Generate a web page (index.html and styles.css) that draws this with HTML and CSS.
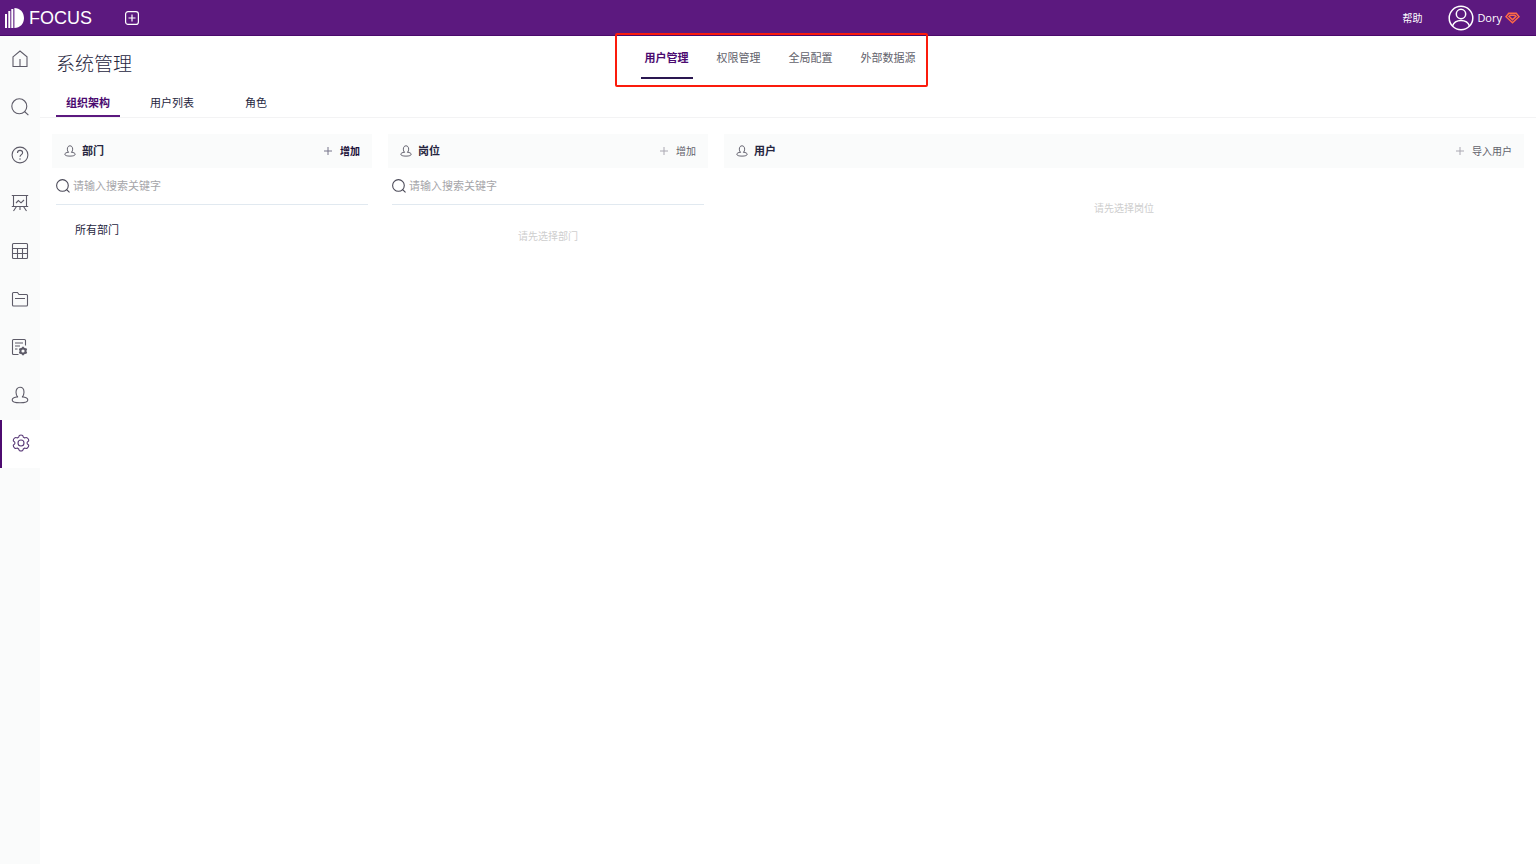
FILE: index.html
```html
<!DOCTYPE html>
<html lang="zh-CN">
<head>
<meta charset="utf-8">
<title>系统管理</title>
<link rel="stylesheet" href="styles.css">
</head>
<body>
<svg class="sprite" aria-hidden="true">
  <symbol id="person" viewBox="0 0 18 18"><path d="M6.900 11.300C5.600 9.900 5 8.200 5 6.200 5 3.200 6.600 1.200 9 1.200s4 2 4 5c0 2-.6 3.700-1.900 5.100M6.900 10.800C3.400 11.200 1.200 12.300 1.200 13.900c0 1.700 3 2.800 7.800 2.800s7.800-1.100 7.800-2.800c0-1.600-2.200-2.700-5.700-3.100"/></symbol>
  <symbol id="search" viewBox="0 0 18 18"><circle cx="8.300" cy="8.300" r="7.500"/><path d="M13.500 13.500l3.900 3.700"/></symbol>
  <symbol id="plus" viewBox="0 0 8 8"><path d="M4 0v8M0 4h8"/></symbol>
</svg>
<header class="topbar">
  <a class="brand" href="#">
    <svg class="brand-mark" viewBox="0 0 19 20" aria-hidden="true"><path d="M0 6h2v14H0zM3.300 3h2v17h-2zM6.300 1h2v19h-2zM9.400 0C15 0 19 4.300 19 10s-4 10-9.600 10z"/></svg>
    <span>FOCUS</span>
  </a>
  <button class="new-button" type="button" aria-label="新建">
    <svg viewBox="0 0 14 14"><rect x=".6" y=".6" width="12.800" height="12.800" rx="2.500"/><path d="M7 3.500v7M3.500 7h7"/></svg>
  </button>
  <a class="help" href="#">帮助</a>
  <button class="account" type="button">
    <svg class="avatar" viewBox="0 0 26 26" aria-hidden="true"><circle cx="13" cy="13" r="11.800"/><circle cx="13" cy="9" r="4.700"/><path d="M4.500 21c1.300-3.900 4.600-5.600 8.500-5.600s7.200 1.700 8.500 5.600"/></svg>
    <span>Dory</span>
    <svg class="gem" viewBox="0 0 16 12" aria-hidden="true"><path d="M4 1h8l3 3.600L8 11 1 4.600z"/><path d="M4.300 4.300L8 7.800l3.700-3.500L10.500 3h-5z"/></svg>
  </button>
</header>
<div class="shell">
  <nav class="sidebar" aria-label="主导航">
    <a href="#" aria-label="首页"><svg viewBox="0 0 18 18"><path d="M2 6.800L9 1l7 5.800V16.500H2zM9 9v7.500"/></svg></a>
    <a href="#" aria-label="搜索"><svg><use href="#search"/></svg></a>
    <a href="#" aria-label="问答"><svg viewBox="0 0 18 18"><circle cx="9" cy="9" r="7.900"/><path d="M6.500 7c0-1.700 1-2.600 2.500-2.600s2.600.9 2.600 2.300c0 1.800-2.600 2-2.600 4M9 12.300v1.400"/></svg></a>
    <a href="#" aria-label="看板"><svg viewBox="0 0 18 18"><path d="M.8 1.500h16.400M2.500 1.500v11M15.500 1.500v11M.8 12.500h16.400M5.500 12.500L2.500 17M12.500 12.500l3 4.500M9 12.500V16M5 9l2.400-2.400 2.600 2.200L13 6"/></svg></a>
    <a href="#" aria-label="数据表"><svg viewBox="0 0 18 18"><rect x="1.500" y="1.500" width="15" height="15" rx="1"/><path d="M1.500 6.500h15M1.500 11.500h15M6.500 6.500v10M11.500 6.500v10"/></svg></a>
    <a href="#" aria-label="资源"><svg viewBox="0 0 18 18"><path d="M1.500 15V3.500q0-1 1-1h4l1.500 2h7.500q1 0 1 1V15q0 1-1 1h-13q-1 0-1-1zM4 8.500h10"/></svg></a>
    <a href="#" aria-label="数据配置"><svg viewBox="0 0 18 18"><path d="M7.500 16.500h-5q-1 0-1-1v-13q0-1 1-1h11q1 0 1 1v5M4 5h8M4 8h5M4 11h2.500"/><circle cx="12" cy="13" r="2.600" stroke-width="2"/><path stroke-width="1.800" d="M12 8.700v1.600M12 15.700v1.600M8.300 10.850l1.400.8M14.300 14.350l1.400.8M8.300 15.150l1.400-.8M14.300 11.650l1.400-.8"/></svg></a>
    <a href="#" aria-label="用户"><svg><use href="#person"/></svg></a>
    <a class="current" href="#" aria-label="系统管理" aria-current="page"><svg viewBox="0 0 18 18"><circle cx="9" cy="9" r="3"/><path d="M7.300 1.500Q9 .5 10.700 1.500Q11 3.500 12.600 3.900Q14.500 3 15.500 4.200Q17 5.500 16.600 7Q15 8 15 9Q15 10 16.600 11Q17 12.500 15.500 13.800Q14.500 15 12.600 14.100Q11 14.500 10.700 16.500Q9 17.500 7.300 16.500Q7 14.500 5.400 14.100Q3.500 15 2.500 13.800Q1 12.500 1.400 11Q3 10 3 9Q3 8 1.400 7Q1 5.500 2.500 4.200Q3.500 3 5.400 3.900Q7 3.500 7.300 1.500z"/></svg></a>
  </nav>
  <main class="main">
    <div class="page-head">
      <h1>系统管理</h1>
      <nav class="sections" aria-label="管理分类">
        <a class="current" href="#">用户管理</a>
        <a href="#">权限管理</a>
        <a href="#">全局配置</a>
        <a href="#">外部数据源</a>
      </nav>
    </div>
    <div class="tabs" role="tablist">
      <button type="button" role="tab" aria-selected="true">组织架构</button>
      <button type="button" role="tab" aria-selected="false">用户列表</button>
      <button type="button" role="tab" aria-selected="false">角色</button>
    </div>
    <div class="panels">
      <section>
        <div class="panel-head">
          <svg class="panel-icon"><use href="#person"/></svg><h2>部门</h2>
          <button class="add strong" type="button"><svg><use href="#plus"/></svg>增加</button>
        </div>
        <label class="search"><svg><use href="#search"/></svg><input type="text" placeholder="请输入搜索关键字" aria-label="搜索部门"></label>
        <ul class="tree"><li><a href="#">所有部门</a></li></ul>
      </section>
      <section>
        <div class="panel-head">
          <svg class="panel-icon"><use href="#person"/></svg><h2>岗位</h2>
          <button class="add" type="button"><svg><use href="#plus"/></svg>增加</button>
        </div>
        <label class="search"><svg><use href="#search"/></svg><input type="text" placeholder="请输入搜索关键字" aria-label="搜索岗位"></label>
        <p class="hint">请先选择部门</p>
      </section>
      <section>
        <div class="panel-head">
          <svg class="panel-icon"><use href="#person"/></svg><h2>用户</h2>
          <button class="add" type="button"><svg><use href="#plus"/></svg>导入用户</button>
        </div>
        <p class="hint">请先选择岗位</p>
      </section>
    </div>
  </main>
</div>
</body>
</html>
```
FILE: styles.css
```css
* { box-sizing: border-box; }
body {
  margin: 0;
  min-height: 100vh;
  display: flex;
  flex-direction: column;
  background: #fff;
  color: #262640;
  font: 11px/16px "Open Sans", "Noto Sans CJK SC", sans-serif;
}
a { color: inherit; text-decoration: none; }
button { border: 0; padding: 0; background: none; color: inherit; font: inherit; cursor: pointer; }
h1, h2, p, ul { margin: 0; padding: 0; font-weight: 400; }
svg { display: block; flex: none; fill: none; stroke: currentColor; }
.sprite { position: absolute; width: 0; height: 0; }

.topbar {
  display: flex;
  align-items: center;
  height: 36px;
  padding: 0 16px 0 5px;
  background: #5c197f;
  border-bottom: 1px solid #4a0a6c;
  color: #fff;
}
.brand { display: flex; align-items: center; gap: 5px; font: 18px/20px "Liberation Sans", sans-serif; }
.brand-mark { width: 19px; height: 20px; fill: #fff; stroke: none; }
.new-button { margin-left: 33px; }
.new-button svg { width: 14px; height: 14px; stroke-width: 1.2; }
.help { margin-left: auto; font-size: 10px; }
.account { display: flex; align-items: center; gap: 3px; margin-left: 26px; }
.avatar { width: 26px; height: 26px; stroke-width: 1.5; }
.gem { width: 15px; height: 12px; color: #ff6a45; stroke-width: 1.6; }

.shell { display: flex; flex: 1; }
.sidebar { flex: none; width: 40px; background: #fafbfb; color: #5d5b68; }
.sidebar a { display: flex; align-items: center; justify-content: center; height: 48px; padding-bottom: 2px; }
.sidebar svg { width: 18px; height: 18px; stroke-width: 1.1; }
.sidebar .current { border-left: 2px solid #4d0b70; background: #fff; color: #5a3a78; }

.main { flex: 1; min-width: 0; }
.page-head {
  display: grid;
  grid-template-columns: 1fr auto 1fr;
  align-items: start;
  padding: 0 32px 0 16px;
}
h1 { padding-top: 13px; font-size: 19px; line-height: 30px; font-weight: 300; }
.sections { position: relative; display: flex; gap: 20px; color: #62626c; }
.sections::after {
  content: "";
  position: absolute;
  inset: -3px -8px -8px -26px;
  border: 2px solid #fb1b0c;
  border-radius: 2px;
  pointer-events: none;
}
.sections a { padding: 14px 4px 11px; border-bottom: 2px solid transparent; }
.sections .current { border-color: #2a1750; color: #4b0a70; font-weight: 700; }

.tabs { display: flex; gap: 20px; margin-top: 11px; padding: 0 16px; border-bottom: 1px solid #f3f3f4; }
.tabs button { width: 64px; height: 27px; border-bottom: 2px solid transparent; }
.tabs [aria-selected="true"] { border-color: #5c197f; color: #4b0a70; font-weight: 700; }

.panels {
  display: grid;
  grid-template-columns: 320px 320px minmax(0, 1fr);
  gap: 16px;
  padding: 16px 12px;
}
.panel-head { display: flex; align-items: center; height: 34px; padding: 0 12px; background: #fafbfb; }
.panel-icon { width: 12px; height: 12px; color: #5d5b68; stroke-width: 1.4; }
h2 { margin-left: 6px; font-size: 11px; font-weight: 700; }
.add { display: flex; align-items: center; gap: 8px; margin-left: auto; font-size: 10px; color: #62626c; }
.add svg { width: 8px; height: 8px; color: #aaa8b2; }
.add.strong { color: #1b1038; font-weight: 700; }
.add.strong svg { color: #77758a; }
.search { display: flex; align-items: center; gap: 3px; height: 37px; margin: 0 4px; border-bottom: 1px solid #e1e9f0; }
.search svg { width: 14px; height: 14px; color: #4b4a58; stroke-width: 1.4; }
.search input { flex: 1; min-width: 0; border: 0; padding: 0; outline: 0; background: none; color: inherit; font: inherit; }
.search input::placeholder { color: #a5a5a9; opacity: 1; }
.tree { padding: 17px 23px; list-style: none; }
.hint { padding-top: 32px; font-size: 10px; text-align: center; color: #cecece; }
.search + .hint { padding-top: 23px; }
```
